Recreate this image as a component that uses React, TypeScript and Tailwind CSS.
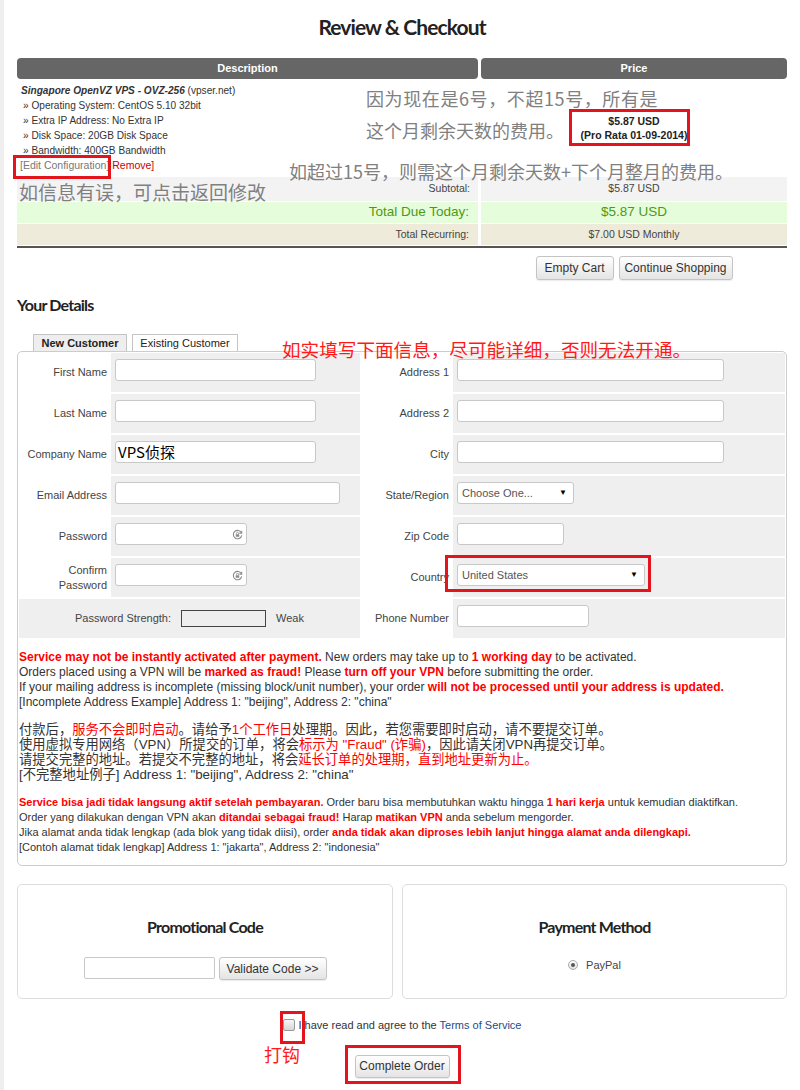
import React from 'react';

const red = 'text-[#ff0000] font-bold';

function RedBox({ className }: { className: string }) {
    return <div className={`pointer-events-none absolute border-[3px] border-[#e3141c] ${className}`} />;
}

function Btn({ children, className = '' }: { children: React.ReactNode; className?: string }) {
    return (
        <button className={`flex items-center justify-center rounded-[3px] border border-[#c4c4c4] bg-gradient-to-b from-white to-[#e4e4e4] text-[12px] text-[#333] shadow-[0_1px_1px_rgba(0,0,0,0.08)] ${className}`}>
            {children}
        </button>
    );
}

function PwIcon() {
    return (
        <svg width="11" height="11" viewBox="0 0 12 12" className="absolute right-[3px] top-[5px]">
            <path d="M10.3 4.2A4.6 4.6 0 1 0 10.6 7" stroke="#8a8a8a" strokeWidth="1.2" fill="none" />
            <path d="M10.6 1.8v2.7H8" stroke="#8a8a8a" strokeWidth="1.1" fill="none" />
            <rect x="4.1" y="5.6" width="3.8" height="2.9" rx="0.4" fill="#8a8a8a" />
            <path d="M4.9 5.6V4.7a1.1 1.1 0 0 1 2.2 0v0.9" stroke="#8a8a8a" strokeWidth="0.9" fill="none" />
        </svg>
    );
}

function Input({ w, children }: { w: string; children?: React.ReactNode }) {
    return (
        <div className={`relative h-[22px] rounded-[3px] border border-[#c8c8c8] bg-white ${w}`}>{children}</div>
    );
}

function Select({ w, text }: { w: string; text: string }) {
    return (
        <div className={`flex h-[22px] items-center justify-between rounded-[3px] border border-[#c8c8c8] bg-white pl-[4px] pr-[6px] text-[11px] text-[#555] ${w}`}>
            <span>{text}</span>
            <span className="text-[8px] text-black">▼</span>
        </div>
    );
}

function Row({ label, children, lw = 'w-[93px]' }: { label: React.ReactNode; children: React.ReactNode; lw?: string }) {
    return (
        <div className="flex h-[39px]">
            <div className={`flex shrink-0 items-center justify-end pr-[4px] text-right text-[11px] leading-[15px] text-[#444] ${lw}`}>{label}</div>
            <div className="flex-1 bg-[#efefef] pl-[4px] pt-[6px]">{children}</div>
        </div>
    );
}

export default function App() {
    return (
        <div className="relative flex min-h-[1090px] w-[800px] bg-white font-['Liberation_Sans',Arial,sans-serif] text-[#333]">
            <div className="w-[4px] shrink-0 bg-[#eeeeee]" />
            <div className="ml-[13px] w-[770px] pt-[14px]">
                <h1 className="h-[26px] text-center font-['Lato',sans-serif] text-[21px] font-bold leading-[26px] tracking-[-0.9px] text-[#222]">
                    Review &amp; Checkout
                </h1>

                {/* cart table */}
                <div className="mt-[18px] grid grid-cols-[461px_306px] gap-x-[3px] gap-y-[1px]">
                    <div className="flex h-[21px] items-center justify-center rounded-[4px] bg-[#666] text-[11px] font-bold text-white">Description</div>
                    <div className="flex h-[21px] items-center justify-center rounded-[4px] bg-[#666] text-[11px] font-bold text-white">Price</div>

                    <div className="h-[96px] pl-[4px] pt-[3px] text-[10.1px] leading-[15px]">
                        <div><b><i>Singapore OpenVZ VPS - OVZ-256</i></b> (vpser.net)</div>
                        <div className="pl-[2px]">» Operating System: CentOS 5.10 32bit</div>
                        <div className="pl-[2px]">» Extra IP Address: No Extra IP</div>
                        <div className="pl-[2px]">» Disk Space: 20GB Disk Space</div>
                        <div className="pl-[2px]">» Bandwidth: 400GB Bandwidth</div>
                        <div className="-ml-[1px] text-[10.5px]"><span className="text-[#777]">[Edit Configuration]</span> <span className="text-[#cc0000]">Remove]</span></div>
                    </div>
                    <div className="flex h-[96px] flex-col items-center justify-center text-[10.5px] font-bold leading-[14px] text-[#222]">
                        <div>$5.87 USD</div>
                        <div>(Pro Rata 01-09-2014)</div>
                    </div>

                    <div className="flex h-[24px] items-center justify-end bg-[#f3f3f3] pr-[8px] text-[10.5px] text-[#444]">Subtotal:</div>
                    <div className="flex h-[24px] items-center justify-center bg-[#f3f3f3] text-[10.5px] text-[#444]">$5.87 USD</div>

                    <div className="flex h-[21px] items-center justify-end bg-[#e6fddb] pr-[9px] text-[13.5px] text-[#4c9a14]">Total Due Today:</div>
                    <div className="flex h-[21px] items-center justify-center bg-[#e6fddb] text-[13.5px] text-[#4c9a14]">$5.87 USD</div>

                    <div className="flex h-[21px] items-center justify-end bg-[#efebdb] pr-[9px] text-[10.5px] text-[#444]">Total Recurring:</div>
                    <div className="flex h-[21px] items-center justify-center bg-[#efebdb] text-[10.5px] text-[#444]">$7.00 USD Monthly</div>

                    <div className="col-span-2 h-[2px] bg-[#555]" />
                </div>

                <div className="mt-[8px] grid grid-cols-[461px_306px] gap-x-[3px]">
                    <div />
                    <div className="flex justify-center gap-[5px]">
                        <Btn className="h-[24px] w-[78px]">Empty Cart</Btn>
                        <Btn className="h-[24px] w-[114px]">Continue Shopping</Btn>
                    </div>
                </div>

                <h2 className="mt-[15px] h-[20px] font-['Lato',sans-serif] text-[16px] font-bold leading-[20px] tracking-[-0.8px] text-[#222]">Your Details</h2>

                {/* tabs */}
                <div className="ml-[16px] mt-[19px] flex gap-[5px]">
                    <div className="flex h-[17px] w-[94px] items-center justify-center border border-b-0 border-[#c4c4c4] bg-[#eeeeee] text-[11px] font-bold text-[#222]">New Customer</div>
                    <div className="flex h-[17px] w-[106px] items-center justify-center border border-b-0 border-[#c4c4c4] bg-white text-[11px] text-[#222]">Existing Customer</div>
                </div>

                <div className="rounded-[5px] border border-[#cccccc] pt-[1px]">
                    <div className="grid grid-cols-[342px_425px]">
                        <div className="flex flex-col gap-[2px]">
                            <Row label="First Name"><Input w="w-[201px]" /></Row>
                            <Row label="Last Name"><Input w="w-[201px]" /></Row>
                            <Row label="Company Name">
                                <Input w="w-[201px]">
                                    <span className="absolute left-[2px] top-[0px] font-['Noto_Sans_CJK_SC',sans-serif] text-[15px] leading-[20px] text-black">VPS侦探</span>
                                </Input>
                            </Row>
                            <Row label="Email Address"><Input w="w-[225px]" /></Row>
                            <Row label="Password"><Input w="w-[132px]"><PwIcon /></Input></Row>
                            <Row label={<span>Confirm<br />Password</span>}><Input w="w-[132px]"><PwIcon /></Input></Row>
                            <div className="ml-[1px] flex h-[39px] items-center justify-center gap-[10px] bg-[#efefef] text-[11px] text-[#444]">
                                <span>Password Strength:</span>
                                <div className="h-[17px] w-[85px] border border-[#444] bg-[#eeeeee]" />
                                <span>Weak</span>
                            </div>
                        </div>
                        <div className="flex flex-col gap-[2px]">
                            <Row label="Address 1"><Input w="w-[267px]" /></Row>
                            <Row label="Address 2"><Input w="w-[267px]" /></Row>
                            <Row label="City"><Input w="w-[267px]" /></Row>
                            <Row label="State/Region"><Select w="w-[117px]" text="Choose One..." /></Row>
                            <Row label="Zip Code"><Input w="w-[107px]" /></Row>
                            <Row label="Country"><Select w="w-[188px]" text="United States" /></Row>
                            <Row label="Phone Number"><Input w="w-[132px]" /></Row>
                        </div>
                    </div>

                    {/* notices */}
                    <div className="whitespace-nowrap pb-[10px] pl-[1px] pt-[12px]">
                        <div className="text-[12px] leading-[15px]">
                            <div><span className={red}>Service may not be instantly activated after payment.</span> New orders may take up to <span className={red}>1 working day</span> to be activated.</div>
                            <div>Orders placed using a VPN will be <span className={red}>marked as fraud!</span> Please <span className={red}>turn off your VPN</span> before submitting the order.</div>
                            <div>If your mailing address is incomplete (missing block/unit number), your order <span className={red}>will not be processed until your address is updated.</span></div>
                            <div>[Incomplete Address Example] Address 1: "beijing", Address 2: "china"</div>
                        </div>
                        <div className="mt-[12px] font-['Liberation_Sans','Noto_Sans_CJK_SC',sans-serif] text-[13.3px] leading-[15px]">
                            <div>付款后，<span className="text-[#ff0000]">服务不会即时启动</span>。请给予<span className="text-[#ff0000]">1个工作日</span>处理期。因此，若您需要即时启动，请不要提交订单。</div>
                            <div>使用虚拟专用网络（VPN）所提交的订单，将会<span className="text-[#ff0000]">标示为 "Fraud" (诈骗)</span>，因此请关闭VPN再提交订单。</div>
                            <div>请提交完整的地址。若提交不完整的地址，将会<span className="text-[#ff0000]">延长订单的处理期，直到地址更新为止。</span></div>
                            <div>[不完整地址例子] Address 1: "beijing", Address 2: "china"</div>
                        </div>
                        <div className="mt-[13px] text-[11px] leading-[15px]">
                            <div><span className={red}>Service bisa jadi tidak langsung aktif setelah pembayaran.</span> Order baru bisa membutuhkan waktu hingga <span className={red}>1 hari kerja</span> untuk kemudian diaktifkan.</div>
                            <div>Order yang dilakukan dengan VPN akan <span className={red}>ditandai sebagai fraud!</span> Harap <span className={red}>matikan VPN</span> anda sebelum mengorder.</div>
                            <div>Jika alamat anda tidak lengkap (ada blok yang tidak diisi), order <span className={red}>anda tidak akan diproses lebih lanjut hingga alamat anda dilengkapi.</span></div>
                            <div>[Contoh alamat tidak lengkap] Address 1: "jakarta", Address 2: "indonesia"</div>
                        </div>
                    </div>
                </div>

                {/* promo + payment */}
                <div className="mt-[18px] grid grid-cols-[376px_385px] gap-x-[9px]">
                    <div className="flex h-[115px] flex-col items-center rounded-[5px] border border-[#dddddd] pt-[32px]">
                        <h3 className="h-[20px] font-['Lato',sans-serif] text-[16px] font-bold leading-[20px] tracking-[-0.8px] text-[#222]">Promotional Code</h3>
                        <div className="mt-[20px] flex gap-[4px]">
                            <div className="h-[22px] w-[131px] rounded-[2px] border border-[#c8c8c8] bg-white" />
                            <Btn className="h-[23px] w-[108px]">Validate Code &gt;&gt;</Btn>
                        </div>
                    </div>
                    <div className="flex h-[115px] flex-col items-center rounded-[5px] border border-[#dddddd] pt-[32px]">
                        <h3 className="h-[20px] font-['Lato',sans-serif] text-[16px] font-bold leading-[20px] tracking-[-0.8px] text-[#222]">Payment Method</h3>
                        <div className="mt-[20px] flex items-center gap-[8px] text-[11px] text-[#444]">
                            <div className="flex h-[10px] w-[10px] items-center justify-center rounded-full border border-[#aaa] bg-gradient-to-b from-white to-[#ddd]">
                                <div className="h-[4px] w-[4px] rounded-full bg-[#555]" />
                            </div>
                            <span>PayPal</span>
                        </div>
                    </div>
                </div>

                <div className="mt-[18px] flex items-center justify-center gap-[4px] text-[11px] text-[#333]">
                    <div className="h-[12px] w-[12px] rounded-[2px] border border-[#999] bg-gradient-to-b from-[#f6f6f6] to-[#d6d6d6]" />
                    <span>I have read and agree to the <span className="text-[#1d4c8c]">Terms of Service</span></span>
                </div>

                <div className="mt-[21px] flex justify-center">
                    <Btn className="h-[23px] w-[95px]">Complete Order</Btn>
                </div>
            </div>

            {/* annotations drawn over the screenshot */}
            <div className="pointer-events-none absolute inset-0 font-['Noto_Sans_CJK_SC',sans-serif] text-[18px] leading-[24px] text-[#808080]">
                <div className="absolute left-[366px] top-[86px] tracking-[0.6px]">因为现在是6号，不超15号，所有是</div>
                <div className="absolute left-[366px] top-[118px]">这个月剩余天数的费用。</div>
                <div className="absolute left-[289px] top-[159px]">如超过15号，则需这个月剩余天数+下个月整月的费用。</div>
                <div className="absolute left-[19px] top-[180px] text-[19px]">如信息有误，可点击返回修改</div>
                <div className="absolute left-[282px] top-[337px] text-[18.6px] text-[#ff1a1a]">如实填写下面信息，尽可能详细，否则无法开通。</div>
                <div className="absolute left-[264px] top-[1042px] text-[#ff1a1a]">打钩</div>
            </div>
            <RedBox className="left-[13px] top-[155px] h-[24px] w-[98px]" />
            <RedBox className="left-[569px] top-[109px] h-[37px] w-[121px]" />
            <RedBox className="left-[445px] top-[555px] h-[37px] w-[206px]" />
            <RedBox className="left-[280px] top-[1011px] h-[33px] w-[25px]" />
            <RedBox className="left-[345px] top-[1045px] h-[39px] w-[116px]" />
        </div>
    );
}
